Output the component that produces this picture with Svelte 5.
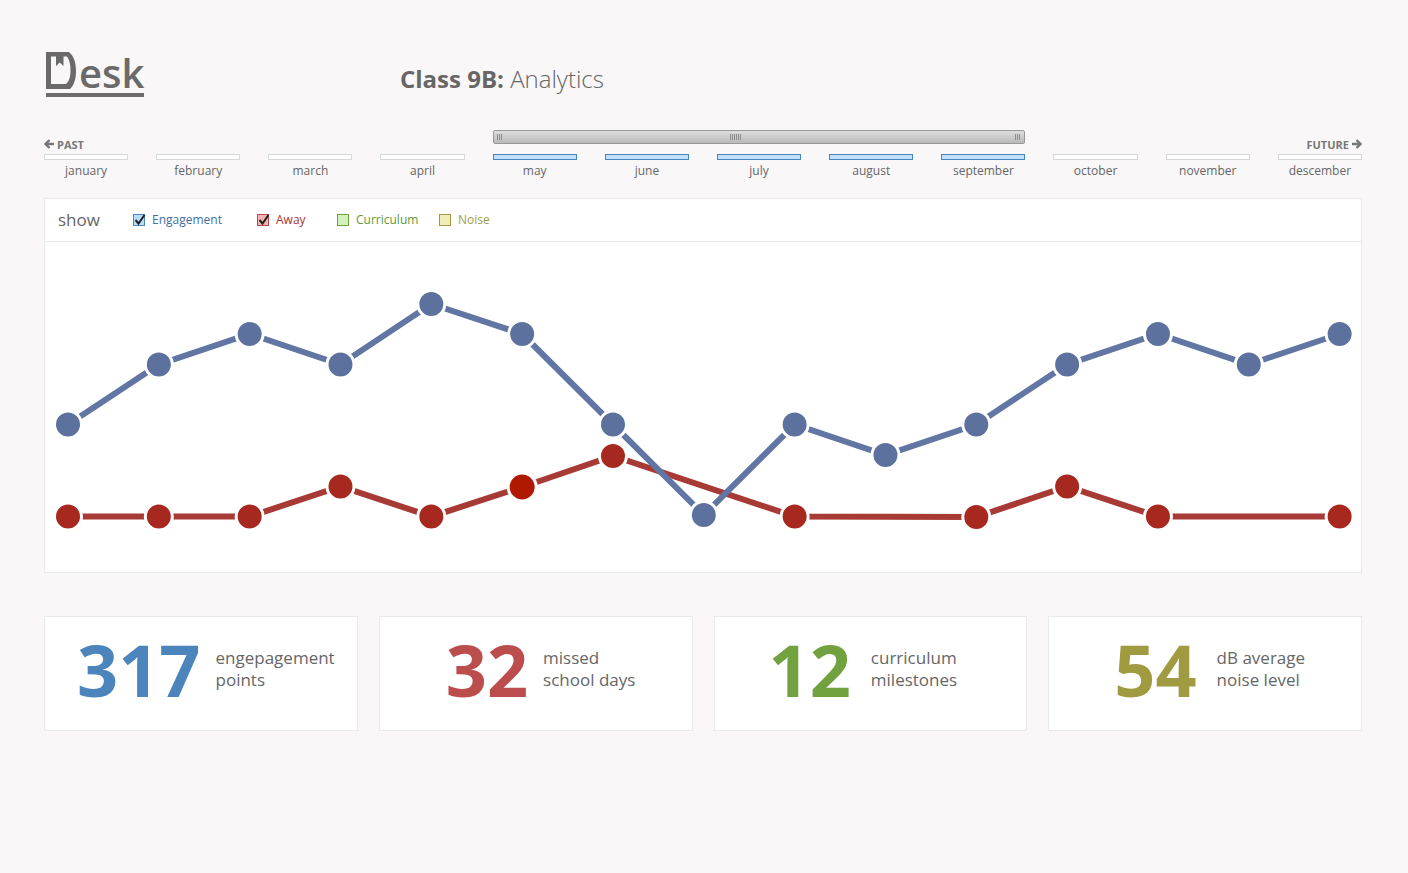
<script>
  const months = ['january', 'february', 'march', 'april', 'may', 'june', 'july', 'august', 'september', 'october', 'november', 'descember'];
  const rangeStart = 4;
  const rangeEnd = 8;

  let filters = $state([
    { id: 'engagement', label: 'Engagement', on: true },
    { id: 'away', label: 'Away', on: true },
    { id: 'curriculum', label: 'Curriculum', on: false },
    { id: 'noise', label: 'Noise', on: false }
  ]);

  // Each point is [step, y]; a series may skip steps.
  const series = [
    {
      id: 'away',
      points: [[0, 274.5], [1, 274.5], [2, 274.5], [3, 244.5], [4, 274.5], [5, 245, true], [6, 214], [8, 274.5], [10, 275], [11, 244.5], [12, 274.5], [14, 274.5]]
    },
    {
      id: 'engagement',
      points: [[0, 182.5], [1, 122.5], [2, 92], [3, 122.5], [4, 62], [5, 92], [6, 182.5], [7, 273], [8, 182.5], [9, 213], [10, 182.5], [11, 122.5], [12, 92], [13, 122.5], [14, 92]]
    }
  ];
  const px = (step) => 23 + step * 90.83;
  const line = (points) => points.map((p) => `${px(p[0])},${p[1]}`).join(' ');
  const shown = (id) => filters.find((f) => f.id === id).on;

  const stats = [
    { id: 'engagement', value: 317, lines: ['engepagement', 'points'] },
    { id: 'away', value: 32, lines: ['missed', 'school days'] },
    { id: 'curriculum', value: 12, lines: ['curriculum', 'milestones'] },
    { id: 'noise', value: 54, lines: ['dB average', 'noise level'] }
  ];
</script>

<main>
  <header>
    <a class="logo" href="#home" aria-label="Desk">
      <span class="word">
        <svg width="31" height="38" viewBox="0 0 31 38" aria-hidden="true">
          <path fill-rule="evenodd" d="M0 0H23C28 4 30 11 30 19C30 27 28 33 24 37H0ZM5 4.500V32H20C23.500 29 24.500 24 24.500 18.500C24.500 12.500 23.500 8 21 4.500H17.500V14L13.700 10.500L10 14V4.500Z" />
        </svg>
        <span>esk</span>
      </span>
    </a>
    <h1><strong>Class 9B:</strong> Analytics</h1>
  </header>

  <nav class="timeline" aria-label="Months">
    <a class="past" href="#past">
      <svg width="10" height="10" viewBox="0 0 10 10" aria-hidden="true"><path d="M5.500 1L1.500 5L5.500 9M2 5H10" /></svg>
      PAST
    </a>
    <div class="range">
      <button class="grip" aria-label="Range start"></button>
      <button class="grip wide" aria-label="Move range"></button>
      <button class="grip" aria-label="Range end"></button>
    </div>
    <a class="future" href="#future">
      FUTURE
      <svg width="10" height="10" viewBox="0 0 10 10" aria-hidden="true"><path d="M4.500 1L8.500 5L4.500 9M8 5H0" /></svg>
    </a>
    {#each months as month, i}
      <a class="month" class:selected={i >= rangeStart && i <= rangeEnd} href={'#' + month}>{month}</a>
    {/each}
  </nav>

  <section class="panel">
    <fieldset>
      <legend>show</legend>
      <div class="filters">
        {#each filters as f}
          <label class={f.id}>
            <span class="box">
              <input type="checkbox" bind:checked={f.on} />
              <svg width="13" height="12" viewBox="0 0 13 12" aria-hidden="true"><path d="M2.500 6L5.500 9.500L11.500 1" /></svg>
            </span>
            {f.label}
          </label>
        {/each}
      </div>
    </fieldset>
    <svg class="chart" viewBox="0 0 1316 330" role="img" aria-label="Engagement and absence over time">
      {#each series as s}
        {#if shown(s.id)}
          <g class={s.id}>
            <polyline points={line(s.points)} />
            {#each s.points as p}
              <circle class:active={p[2]} cx={px(p[0])} cy={p[1]} r={p[2] ? 14 : 13.5} />
            {/each}
          </g>
        {/if}
      {/each}
    </svg>
  </section>

  <section class="stats">
    {#each stats as s}
      <article class={s.id}>
        <strong>{s.value}</strong>
        <p>{s.lines[0]}<br />{s.lines[1]}</p>
      </article>
    {/each}
  </section>
</main>

<style>
  :global(body) {
    margin: 0;
    background: #f9f7f8;
  }
  main {
    padding: 48px 46px 48px 44px;
    font-family: 'Open Sans', 'Noto Sans', sans-serif;
    color: #666;
  }
  a {
    color: inherit;
    text-decoration: none;
  }
  header {
    display: grid;
    grid-template-columns: 356px 1fr;
    height: 82px;
    align-items: start;
  }
  .logo {
    justify-self: start;
    margin-left: 2px;
    width: 98px;
    height: 45px;
    border-bottom: 4px solid #6c6c6c;
  }
  .word {
    display: flex;
    align-items: flex-start;
    gap: 2px;
    font-size: 40px;
    font-weight: 600;
    line-height: 50px;
    color: #6a6a6a;
  }
  .word svg {
    flex: none;
    margin-top: 4px;
    fill: #6a6a6a;
  }
  h1 {
    margin: 14px 0 0;
    font-size: 24px;
    line-height: 34px;
    font-weight: 300;
  }
  h1 strong {
    font-weight: 700;
  }

  .timeline {
    display: grid;
    grid-template-columns: repeat(12, 1fr);
    grid-template-rows: 24px auto;
    column-gap: 28px;
  }
  .past,
  .future {
    display: flex;
    align-items: center;
    gap: 3px;
    height: 14px;
    margin-top: 7px;
    font-size: 11px;
    font-weight: 700;
    white-space: nowrap;
    color: #777;
  }
  .past svg,
  .future svg {
    fill: none;
    stroke: #777;
    stroke-width: 2.4;
  }
  .future {
    grid-column: 11 / 13;
    justify-content: flex-end;
  }
  .range {
    grid-column: 5 / 10;
    box-sizing: border-box;
    height: 14px;
    display: flex;
    justify-content: space-between;
    align-items: center;
    padding: 0 4px 0 3px;
    border: 1px solid #999;
    border-radius: 2px;
    background: linear-gradient(#dedede, #b9b9b9);
  }
  .grip {
    width: 5px;
    height: 6px;
    padding: 0;
    border: 0;
    background: repeating-linear-gradient(90deg, #8c8c8c 0 1px, transparent 1px 2px);
    cursor: ew-resize;
  }
  .grip.wide {
    width: 11px;
    margin-right: 46px;
  }
  .month {
    font-size: 12px;
    line-height: 22px;
    text-align: center;
    color: #666;
  }
  .month::before {
    content: '';
    display: block;
    height: 4px;
    border: 1px solid #d5d9d8;
    background: #fff;
  }
  .month.selected::before {
    border-color: #4a86bd;
    background: #c0e0ff;
  }

  .panel {
    margin-top: 16px;
    border: 1px solid #e9ebeb;
    background: #fff;
  }
  fieldset {
    display: flex;
    align-items: center;
    height: 42px;
    margin: 0;
    padding: 0 13px;
    border: 0;
    border-bottom: 1px solid #e9ebeb;
  }
  legend {
    float: left;
    width: 75px;
    padding: 0;
    font-size: 17px;
    line-height: 38px;
  }
  .filters {
    display: grid;
    grid-template-columns: 124px 80px 102px auto;
    align-items: center;
    height: 44px;
  }
  label {
    display: flex;
    align-items: center;
    gap: 7px;
    font-size: 12px;
    line-height: 16px;
    color: var(--text);
  }
  .box {
    display: grid;
    width: 12px;
    height: 12px;
  }
  .box > * {
    grid-area: 1 / 1;
  }
  input {
    appearance: none;
    box-sizing: border-box;
    width: 12px;
    height: 12px;
    margin: 0;
    border: 1px solid var(--edge);
    background: var(--fill);
  }
  .box svg {
    fill: none;
    stroke: #222;
    stroke-width: 2;
    visibility: hidden;
    pointer-events: none;
  }
  input:checked + svg {
    visibility: visible;
  }
  label.engagement { --text: #42709f; --edge: #4a86bd; --fill: #b9dcfb; }
  label.away { --text: #a53434; --edge: #bd4a4a; --fill: #f0b2b2; }
  label.curriculum { --text: #65963a; --edge: #70a03c; --fill: #d3f1bb; }
  label.noise { --text: #a39e45; --edge: #a09a3e; --fill: #f0edba; }

  .chart {
    display: block;
    width: 100%;
    height: auto;
  }
  .chart polyline {
    fill: none;
    stroke: var(--line);
    stroke-width: 6;
  }
  .chart circle {
    fill: var(--dot);
    stroke: #fff;
    stroke-width: 3;
  }
  .chart circle.active {
    fill: #b01800;
  }
  g.engagement { --line: #6276a4; --dot: #5d719f; }
  g.away { --line: #a83a35; --dot: #a6281f; }

  .stats {
    display: grid;
    grid-template-columns: repeat(4, 1fr);
    gap: 21px;
    margin-top: 43px;
  }
  article {
    box-sizing: border-box;
    display: flex;
    align-items: center;
    gap: var(--gap);
    height: 115px;
    padding: 0 0 10px var(--inset);
    border: 1px solid #e9ebeb;
    background: #fff;
  }
  article strong {
    font-size: 72px;
    line-height: 80px;
    font-weight: 700;
    color: var(--ink);
  }
  article p {
    margin: 0;
    font-size: 17px;
    line-height: 22px;
    white-space: nowrap;
  }
  article.engagement { --inset: 32px; --gap: 15px; --ink: #4c85bb; }
  article.away { --inset: 66px; --gap: 15px; --ink: #bc4d4d; }
  article.curriculum { --inset: 54px; --gap: 20px; --ink: #72a140; }
  article.noise { --inset: 65px; --gap: 20px; --ink: #a09a40; }
</style>
